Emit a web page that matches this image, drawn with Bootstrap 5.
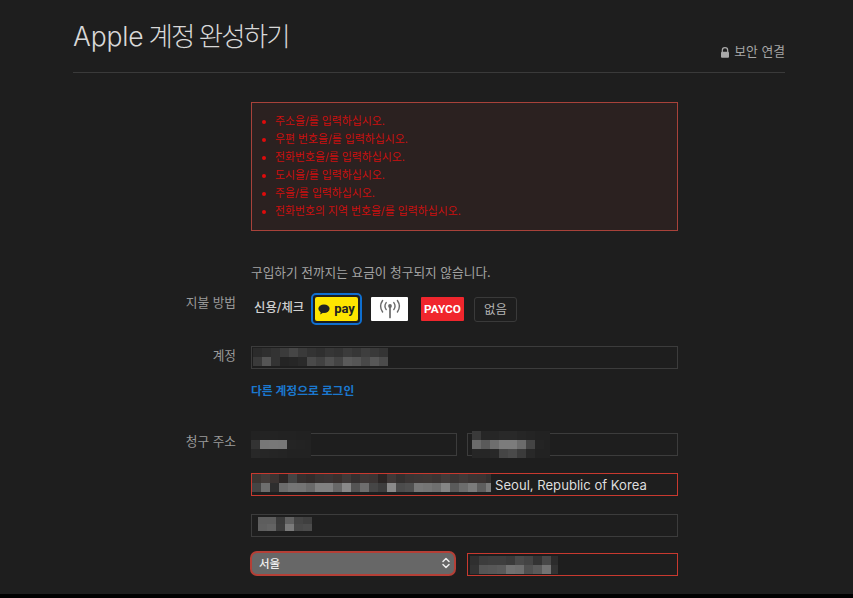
<!DOCTYPE html>
<html lang="ko">
<head>
<meta charset="utf-8">
<title>Apple 계정 완성하기</title>
<link href="https://cdn.jsdelivr.net/npm/bootstrap@5.3.0/dist/css/bootstrap.min.css" rel="stylesheet">
<style>
html,body{height:598px;overflow:hidden;background:#000}
body{font-family:"Inter","Noto Sans CJK KR",sans-serif;color:#aaa;font-size:12px}
.sheet{height:594px;background:#1e1e1e;padding:0 68px 0 73px;overflow:hidden}
.head{height:73px;border-bottom:1px solid #3a3a3a}
.head h1{font-size:26.5px;font-weight:300;color:#d8d8d8;margin:0 0 18px;line-height:36px;letter-spacing:-.2px;word-spacing:-2px}
.head h1 span{letter-spacing:-1.9px}
.secure{font-size:12.8px;color:#a6a6a6;line-height:16px;margin-bottom:12px}
.secure svg{margin-right:4px}
.lbl{width:163px;margin-right:15px;text-align:right;color:#9a9a9a;font-size:12.7px;line-height:18px;flex:none}
.fields{width:427px;flex:none}
.errbox{margin:29px 0 0 178px;width:427px;height:129px;border:1px solid #a8423a;background:#2b2120;color:#cc0f0f;font-size:10.85px;padding:10px 0 0 22px}
.errbox ul{margin:0;padding:0 0 0 1px;list-style:none}
.errbox li{line-height:17.9px;position:relative;padding-left:0}
.errbox li::before{content:"";position:absolute;left:-13px;top:7px;width:4px;height:4px;border-radius:50%;background:#e00b0b}
.notice{margin:33px 0 0 178px;line-height:18px;color:#a3a3a3;font-size:12.7px}
.payrow{margin-top:11px;height:32px}
.payrow .lbl{margin-top:1px}
.card-pick{margin-left:3px;color:#d0d0d0;font-weight:500;font-size:12.4px;line-height:28px;height:32px;width:57px;padding-top:1px;white-space:nowrap}
.pay-on{width:51px;height:32px;border:2px solid #0f6fd0;border-radius:5px;padding:2px;background:#1e1e1e}
.pay-on>div{height:100%;background:#fee500;border-radius:2px;color:#222;font-weight:700;font-size:13px;line-height:22px;font-family:"Roboto",sans-serif}
.pay-tile{height:24px;margin-left:9px;border-radius:1px}
.tile-w{width:37px;background:#fff}
.tile-p{width:43px;margin-left:13px;background:#f0262d;color:#fff;font:700 11.8px/24px "Roboto",sans-serif;text-align:center}
.tile-n{width:43px;height:25px;margin-left:10px;border:1px solid #3a3a3a;border-radius:3px;color:#b5b5b5;font-size:12.4px;line-height:23px;text-align:center}
.fld{position:relative;height:23px}
.fld .form-control{height:100%;background:#1e1e1e;border:1px solid #3c3c3c;border-radius:0;padding:0 7px;color:#ddd;font-size:13.1px;line-height:20px;box-shadow:none;transition:none}
.fld.errfield{box-sizing:border-box;border:1px solid #c8392f}
.fld.errfield .form-control{border:0}
.over-mos{position:absolute;filter:blur(.4px)}
.over-mos rect{width:9px;height:9px}
.acct{margin-top:21px}
.acct .lbl{padding-top:1px}
.other{display:block;margin-top:14px;color:#1b78cf;font-weight:700;font-size:11.8px;line-height:16px;text-decoration:none}
.bill{margin-top:34px}
.gap10{gap:10px}
.mt-addr{margin-top:17px}
.mt-addr2{margin-top:18px}
.mt-sel{margin-top:16px}
.fld select.sel-in{display:block;width:206px;height:25px;margin:-2px 0 0 -1px;appearance:none;background:#676767;border:2px solid #b53f36;border-radius:7px;color:#eee;font-size:11.5px;font-weight:500;line-height:20px;padding:0 7px;box-shadow:none}
.sel-arrow{position:absolute;left:190px;top:3px}
.w-half1{width:206px;flex:none}
.w-half2{width:211px;flex:none}
.fld .addr-in{padding-left:243px}
</style>
</head>
<body>
<div class="sheet">
  <header class="head d-flex justify-content-between align-items-end">
    <h1>Apple <span>계정</span> <span>완성하기</span></h1>
    <div class="secure d-flex align-items-center">
      <svg width="10" height="11" viewBox="0 0 10 11"><path d="M2.3 5V3.4a2.7 2.7 0 0 1 5.4 0V5" fill="none" stroke="#aaa" stroke-width="1.2"/><rect x="1" y="4.8" width="8" height="6" rx="1" fill="#aaa"/></svg>
      <span>보안 연결</span>
    </div>
  </header>

  <div class="errbox">
    <ul>
      <li>주소을/를 입력하십시오.</li>
      <li>우편 번호을/를 입력하십시오.</li>
      <li>전화번호을/를 입력하십시오.</li>
      <li>도시을/를 입력하십시오.</li>
      <li>주을/를 입력하십시오.</li>
      <li>전화번호의 지역 번호을/를 입력하십시오.</li>
    </ul>
  </div>

  <p class="notice mb-0">구입하기 전까지는 요금이 청구되지 않습니다.</p>

  <div class="payrow d-flex">
    <div class="lbl">지불 방법</div>
    <div class="d-flex align-items-start">
      <div class="card-pick">신용/체크</div>
      <div class="pay-on"><div class="d-flex align-items-center justify-content-center gap-1">
        <svg width="12" height="11" viewBox="0 0 12 11"><ellipse cx="6" cy="4.8" rx="5.6" ry="4.2" fill="#222"/><path d="M2.8 7.5 2.2 10.4 5.4 8.4z" fill="#222"/></svg><span>pay</span>
      </div></div>
      <div class="pay-tile tile-w mt-1 d-flex align-items-center justify-content-center">
        <svg width="26" height="22" viewBox="0 0 26 22" fill="none" stroke="#6a6a6a" stroke-width="1.4" stroke-linecap="round"><circle cx="13" cy="8" r="1.9" fill="#6a6a6a" stroke="none"/><path d="M13 9v10.5" stroke-width="1.7"/><path d="M9.2 4.6a6 6 0 0 0 0 7M16.8 4.6a6 6 0 0 1 0 7"/><path d="M5.6 2.5a10 10 0 0 0 0 11.5M20.4 2.5a10 10 0 0 1 0 11.5"/></svg>
      </div>
      <div class="pay-tile tile-p mt-1">PAYCO</div>
      <div class="tile-n mt-1">없음</div>
    </div>
  </div>

  <div class="acct d-flex">
    <div class="lbl">계정</div>
    <div class="fields">
      <div class="fld">
        <input class="form-control" type="text" aria-label="계정">
        <svg class="over-mos" style="left:2px;top:2px" width="135" height="18">
          <rect x="0" y="0" fill="#2b2b2b"/><rect x="9" y="0" fill="#2f2f2f"/><rect x="18" y="0" fill="#333"/><rect x="27" y="0" fill="#3b3b3b"/><rect x="36" y="0" fill="#464646"/><rect x="45" y="0" fill="#3a3a3a"/><rect x="54" y="0" fill="#333"/><rect x="63" y="0" fill="#2f2f2f"/><rect x="72" y="0" fill="#363636"/><rect x="81" y="0" fill="#333"/><rect x="90" y="0" fill="#3b3b3b"/><rect x="99" y="0" fill="#363636"/><rect x="108" y="0" fill="#3e3e3e"/><rect x="117" y="0" fill="#393939"/><rect x="126" y="0" fill="#343434"/>
          <rect x="0" y="9" fill="#3a3a3a"/><rect x="9" y="9" fill="#555"/><rect x="18" y="9" fill="#333"/><rect x="27" y="9" fill="#242424"/><rect x="36" y="9" fill="#262626"/><rect x="45" y="9" fill="#2a2a2a"/><rect x="54" y="9" fill="#4a4a4a"/><rect x="63" y="9" fill="#414141"/><rect x="72" y="9" fill="#505050"/><rect x="81" y="9" fill="#444"/><rect x="90" y="9" fill="#5a5a5a"/><rect x="99" y="9" fill="#555"/><rect x="108" y="9" fill="#484848"/><rect x="117" y="9" fill="#575757"/><rect x="126" y="9" fill="#4b4b4b"/>
        </svg>
      </div>
      <a href="#" class="other">다른 계정으로 로그인</a>
    </div>
  </div>

  <div class="bill d-flex">
    <div class="lbl">청구 주소</div>
    <div class="fields">
      <div class="d-flex gap10">
        <div class="fld w-half1">
          <input class="form-control" type="text" aria-label="이름">
          <svg class="over-mos" style="left:0;top:-2px" width="60" height="27">
            <rect x="0" y="0" fill="#222"/><rect x="9" y="0" fill="#232323"/><rect x="18" y="0" fill="#232323"/><rect x="27" y="0" fill="#222"/><rect x="36" y="0" fill="#222"/><rect x="45" y="0" fill="#212121"/><rect x="54" y="0" fill="#212121"/>
            <rect x="0" y="9" fill="#333"/><rect x="9" y="9" fill="#777"/><rect x="18" y="9" fill="#787878"/><rect x="27" y="9" fill="#777"/><rect x="36" y="9" fill="#242424"/><rect x="45" y="9" fill="#232323"/><rect x="54" y="9" fill="#222"/>
            <rect x="0" y="18" fill="#282828"/><rect x="9" y="18" fill="#262626"/><rect x="18" y="18" fill="#252525"/><rect x="27" y="18" fill="#242424"/><rect x="36" y="18" fill="#222"/><rect x="45" y="18" fill="#222"/><rect x="54" y="18" fill="#222"/>
          </svg>
        </div>
        <div class="fld w-half2">
          <input class="form-control" type="text" aria-label="성">
          <svg class="over-mos" style="left:5px;top:-2px" width="78" height="28">
            <rect x="0" y="0" fill="#3a3a3a"/><rect x="9" y="0" fill="#262626"/><rect x="18" y="0" fill="#262626"/><rect x="27" y="0" fill="#292929"/><rect x="36" y="0" fill="#292929"/><rect x="45" y="0" fill="#262626"/><rect x="54" y="0" fill="#242424"/><rect x="63" y="0" fill="#222"/><rect x="72" y="0" fill="#222"/>
            <rect x="0" y="9" fill="#6a6a6a"/><rect x="9" y="9" fill="#5a5a5a"/><rect x="18" y="9" fill="#6e6e6e"/><rect x="27" y="9" fill="#7c7c7c"/><rect x="36" y="9" fill="#7c7c7c"/><rect x="45" y="9" fill="#6c6c6c"/><rect x="54" y="9" fill="#444"/><rect x="63" y="9" fill="#242424"/><rect x="72" y="9" fill="#222"/>
            <rect x="0" y="18" fill="#262626"/><rect x="9" y="18" fill="#262626"/><rect x="18" y="18" fill="#282828"/><rect x="27" y="18" fill="#454545"/><rect x="36" y="18" fill="#4a4a4a"/><rect x="45" y="18" fill="#3b3b3b"/><rect x="54" y="18" fill="#282828"/><rect x="63" y="18" fill="#222"/><rect x="72" y="18" fill="#222"/>
          </svg>
        </div>
      </div>

      <div class="fld errfield mt-addr">
        <input class="form-control addr-in" type="text" value="Seoul, Republic of Korea" aria-label="주소">
        <svg class="over-mos" style="left:0;top:0" width="239" height="19">
          <rect x="0" y="0" fill="#3c3532"/><rect x="9" y="0" fill="#433c3a"/><rect x="18" y="0" fill="#3b3432"/><rect x="27" y="0" fill="#2b2625"/><rect x="36" y="0" fill="#444"/><rect x="45" y="0" fill="#35302f"/><rect x="54" y="0" fill="#322c2b"/><rect x="63" y="0" fill="#383332"/><rect x="72" y="0" fill="#3a3434"/><rect x="81" y="0" fill="#38302e"/><rect x="90" y="0" fill="#3f3a39"/><rect x="99" y="0" fill="#343030"/><rect x="108" y="0" fill="#3d3736"/><rect x="117" y="0" fill="#3b3534"/><rect x="126" y="0" fill="#2a2524"/><rect x="135" y="0" fill="#3f3938"/><rect x="144" y="0" fill="#33302f"/><rect x="153" y="0" fill="#3a3534"/><rect x="162" y="0" fill="#3c3635"/><rect x="171" y="0" fill="#3d3735"/><rect x="180" y="0" fill="#3a3433"/><rect x="189" y="0" fill="#413b3a"/><rect x="198" y="0" fill="#3a3534"/><rect x="207" y="0" fill="#403a39"/><rect x="216" y="0" fill="#3b3534"/><rect x="225" y="0" fill="#3b3433"/><rect x="234" y="0" fill="#33302f"/>
          <rect x="0" y="9" fill="#444"/><rect x="9" y="9" fill="#6e6e6e"/><rect x="18" y="9" fill="#2e2e2e"/><rect x="27" y="9" fill="#6c6c6c"/><rect x="36" y="9" fill="#757575"/><rect x="45" y="9" fill="#747474"/><rect x="54" y="9" fill="#6a6a6a"/><rect x="63" y="9" fill="#818181"/><rect x="72" y="9" fill="#818181"/><rect x="81" y="9" fill="#686868"/><rect x="90" y="9" fill="#898989"/><rect x="99" y="9" fill="#545454"/><rect x="108" y="9" fill="#6e6e6e"/><rect x="117" y="9" fill="#464646"/><rect x="126" y="9" fill="#3d3d3d"/><rect x="135" y="9" fill="#8a8a8a"/><rect x="144" y="9" fill="#4c4c4c"/><rect x="153" y="9" fill="#505050"/><rect x="162" y="9" fill="#787878"/><rect x="171" y="9" fill="#757575"/><rect x="180" y="9" fill="#6f6f6f"/><rect x="189" y="9" fill="#858585"/><rect x="198" y="9" fill="#5a5a5a"/><rect x="207" y="9" fill="#6c6c6c"/><rect x="216" y="9" fill="#7b7b7b"/><rect x="225" y="9" fill="#5e5e5e"/><rect x="234" y="9" fill="#7a7a7a"/>
        </svg>
      </div>

      <div class="fld mt-addr2">
        <input class="form-control" type="text" aria-label="우편 번호">
        <svg class="over-mos" style="left:7px;top:3px" width="54" height="14">
          <rect x="0" y="0" fill="#5d5d5d"/><rect x="9" y="0" fill="#5d5d5d"/><rect x="18" y="0" fill="#3a3a3a"/><rect x="27" y="0" fill="#616161"/><rect x="36" y="0" fill="#444"/><rect x="45" y="0" fill="#3f3f3f"/>
          <rect x="0" y="7" fill="#5f5f5f"/><rect x="9" y="7" fill="#636363"/><rect x="18" y="7" fill="#3c3c3c"/><rect x="27" y="7" fill="#7a7a7a"/><rect x="36" y="7" fill="#484848"/><rect x="45" y="7" fill="#4b4b4b"/>
        </svg>
      </div>

      <div class="d-flex gap10 mt-sel">
        <div class="fld w-half1">
          <select class="sel-in form-control" aria-label="도시"><option>서울</option></select>
          <svg class="sel-arrow" width="10" height="14" viewBox="0 0 10 14" fill="none" stroke="#eee" stroke-width="1.5" stroke-linecap="round" stroke-linejoin="round"><path d="M2 5.5 5 2.5 8 5.5M2 8.5 5 11.5 8 8.5"/></svg>
        </div>
        <div class="fld errfield w-half2">
          <input class="form-control" type="text" aria-label="전화번호">
          <svg class="over-mos" style="left:2px;top:2px" width="88" height="18">
            <rect x="0" y="0" fill="#2f2f2f"/><rect x="9" y="0" fill="#3c3c3c"/><rect x="18" y="0" fill="#3e3e3e"/><rect x="27" y="0" fill="#3e3e3e"/><rect x="36" y="0" fill="#3a3a3a"/><rect x="45" y="0" fill="#4a4a4a"/><rect x="54" y="0" fill="#444"/><rect x="63" y="0" fill="#333"/><rect x="72" y="0" fill="#484848"/><rect x="81" y="0" fill="#2c2c2c"/>
            <rect x="0" y="9" fill="#333"/><rect x="9" y="9" fill="#555"/><rect x="18" y="9" fill="#575757"/><rect x="27" y="9" fill="#5a5a5a"/><rect x="36" y="9" fill="#717171"/><rect x="45" y="9" fill="#6e6e6e"/><rect x="54" y="9" fill="#505050"/><rect x="63" y="9" fill="#5a5a5a"/><rect x="72" y="9" fill="#737373"/><rect x="81" y="9" fill="#333"/>
          </svg>
        </div>
      </div>
    </div>
  </div>
</div>
</body>
</html>
